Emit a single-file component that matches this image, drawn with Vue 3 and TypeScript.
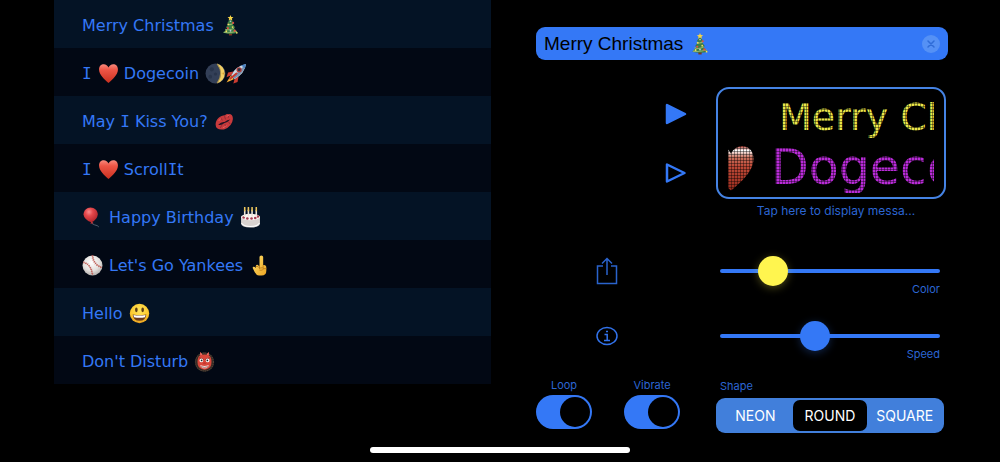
<script setup lang="ts">
import { ref } from 'vue'

interface Part {
  kind: 'text' | 'serif' | 'emoji'
  value: string
}

const text = (value: string): Part => ({ kind: 'text', value })
const serif = (value: string): Part => ({ kind: 'serif', value })
const emoji = (value: string): Part => ({ kind: 'emoji', value })

const presets: Part[][] = [
  [text('Merry Christmas '), emoji('tree')],
  [serif('I'), text(' '), emoji('heart'), text(' Dogecoin '), emoji('moon'), emoji('rocket')],
  [text('May '), serif('I'), text(' Kiss You? '), emoji('kiss')],
  [serif('I'), text(' '), emoji('heart'), text(' Scroll'), serif('I'), text('t')],
  [emoji('balloon'), text(' Happy Birthday '), emoji('cake')],
  [emoji('baseball'), text(" Let's Go Yankees "), emoji('finger')],
  [text('Hello '), emoji('smile')],
  [text("Don't Disturb "), emoji('ogre')],
]

const shapes = ['NEON', 'ROUND', 'SQUARE']

const message = ref('Merry Christmas')
const color = ref(20)
const speed = ref(42)
const loop = ref(true)
const vibrate = ref(true)
const shape = ref('ROUND')
</script>

<template>
  <div class="screen">
    <svg class="sprite" width="0" height="0" aria-hidden="true">
      <defs>
        <linearGradient id="g-heart" x1="0" y1="0" x2="0" y2="1">
          <stop offset="0" stop-color="#f9897c" />
          <stop offset="0.3" stop-color="#ee5546" />
          <stop offset="1" stop-color="#c9301f" />
        </linearGradient>
        <linearGradient id="g-led-heart" x1="0" y1="0" x2="0" y2="1">
          <stop offset="0" stop-color="#b84034" />
          <stop offset="0.1" stop-color="#fff" />
          <stop offset="0.25" stop-color="#c9725f" />
          <stop offset="0.45" stop-color="#bf4a38" />
          <stop offset="1" stop-color="#952a1c" />
        </linearGradient>
        <radialGradient id="g-balloon" cx="0.38" cy="0.3" r="0.7">
          <stop offset="0" stop-color="#f98a8c" />
          <stop offset="0.4" stop-color="#e4474b" />
          <stop offset="1" stop-color="#b3262c" />
        </radialGradient>
        <radialGradient id="g-ball" cx="0.45" cy="0.35" r="0.7">
          <stop offset="0" stop-color="#fff" />
          <stop offset="0.6" stop-color="#e3dfdc" />
          <stop offset="1" stop-color="#a9a5a2" />
        </radialGradient>
        <radialGradient id="g-smile" cx="0.5" cy="0.35" r="0.7">
          <stop offset="0" stop-color="#ffe65c" />
          <stop offset="0.65" stop-color="#fcc92e" />
          <stop offset="1" stop-color="#e08f1b" />
        </radialGradient>
        <linearGradient id="g-hand" x1="0" y1="0" x2="1" y2="1">
          <stop offset="0" stop-color="#ffe06a" />
          <stop offset="1" stop-color="#eda524" />
        </linearGradient>
        <symbol id="tree" viewBox="0 0 40 40">
          <path d="M17 33h6v6h-6z" fill="#7a3524" />
          <path d="M20 6l6 9-3 1 6 8-3 1 8 9q-14 4-28 0l8-9-3-1 6-8-3-1z" fill="#3c7c43" />
          <path d="M14 17q6 3 11-1M10 27q9 3 17-2M7 33q12 2 25-2" fill="none" stroke="#94b56b" stroke-width="2" />
          <path d="M20 0l1.6 3.7 4 .3-3 2.6.9 3.9-3.5-2.1-3.5 2.1.9-3.9-3-2.6 4-.3z" fill="#f6d448" />
          <g fill="#dc5144"><circle cx="25" cy="15" r="2" /><circle cx="15" cy="25" r="2" /><circle cx="28" cy="30" r="2.2" /></g>
          <g fill="#f5df65"><circle cx="16" cy="18" r="1.6" /><circle cx="24" cy="23" r="1.6" /><circle cx="12" cy="31" r="1.8" /><circle cx="32" cy="34" r="1.6" /></g>
          <g fill="#b9cad9"><circle cx="20" cy="12" r="1.5" /><circle cx="20" cy="30" r="1.7" /></g>
        </symbol>
        <symbol id="heart" viewBox="0 0 40 40">
          <path d="M20 38C13 32 2 23 2 12.500C2 6 6 2.500 11 2.500c4 0 7.500 2.500 9 6c1.500-3.500 5-6 9-6c5 0 9 3.500 9 10C38 23 27 32 20 38z" fill="url(#g-heart)" />
        </symbol>
        <symbol id="led-heart" viewBox="0 0 40 40">
          <path d="M20 38C13 32 2 23 2 12.500C2 6 6 2.500 11 2.500c4 0 7.500 2.500 9 6c1.500-3.500 5-6 9-6c5 0 9 3.500 9 10C38 23 27 32 20 38z" fill="url(#g-led-heart)" />
        </symbol>
        <symbol id="moon" viewBox="0 0 40 40">
          <circle cx="20" cy="20" r="19" fill="#333f57" />
          <path d="M23 1.500a19 19 0 0 1 0 37q14-18 0-37z" fill="#f3cf63" />
          <path d="M23 1.500q14 18 0 37" fill="none" stroke="#ab944f" stroke-width="2" />
          <g fill="#28344a"><circle cx="13" cy="12" r="4" /><circle cx="20" cy="21" r="3" /><circle cx="10" cy="26" r="3.500" /></g>
          <circle cx="35" cy="20" r="1.800" fill="#d49d35" />
        </symbol>
        <symbol id="rocket" viewBox="0 0 40 40">
          <path d="M14 16L4 18 1 27l10-4zM24 25l-2 11-8 3 3-11z" fill="#c93b31" />
          <path d="M9 24L1 37l14-6z" fill="#f3a72e" />
          <path d="M10 26l-5 8 8-4z" fill="#ffe374" />
          <path d="M10 24Q16 7 38 2Q36 20 16 31z" fill="#c9d8e5" />
          <path d="M16 30Q35 19 38 2L13 27z" fill="#7893b2" />
          <path d="M29 4.500L38 2l-2 9z" fill="#4a82c4" />
          <circle cx="25" cy="13" r="5" fill="#bb3e38" />
          <circle cx="25" cy="13" r="2.800" fill="#2b3445" />
          <path d="M20 20L8 30" stroke="#c93b31" stroke-width="4" stroke-linecap="round" />
        </symbol>
        <symbol id="kiss" viewBox="0 0 40 40">
          <path d="M3 25C4 15 12 8 21 8q3-3 6-2q9-1 9 9q-1 14-17 20Q3 37 3 25z" fill="#c93a3c" />
          <path d="M8 26q6-6 12-5q5-5 11-5q-4 5-11 7q-6 5-12 3z" fill="#221323" />
          <path d="M13 13l3 5M20 10l2 6M28 8l-1 5M12 32l3-5M22 31l-1-6M31 25l-4-5" stroke="#812934" stroke-width="1.500" />
          <path d="M9 19l4-5M24 10l5-2M17 32l7-4" stroke="#ed6867" stroke-width="1.500" />
        </symbol>
        <symbol id="balloon" viewBox="0 0 40 40">
          <path d="M19 28q-1 5 5 6q6 1 8 4" fill="none" stroke="#657080" stroke-width="1.500" />
          <path d="M16 1C24 1 30 7 30 14c0 7-7 14-12 15c-7-1-15-8-15-15C3 7 9 1 16 1z" fill="url(#g-balloon)" />
          <path d="M18 27l4 4-6 1z" fill="#bd3034" />
        </symbol>
        <symbol id="cake" viewBox="0 0 40 40">
          <path d="M2 18v14q1 7 18 7t18-7V18z" fill="#d9d3d0" />
          <ellipse cx="20" cy="19" rx="18" ry="6" fill="#fbf6f3" />
          <path d="M3 31q4 6 17 6t17-6" fill="none" stroke="#fff" stroke-width="2" />
          <g fill="#a63c50"><circle cx="7" cy="20" r="2.500" /><circle cx="14" cy="22" r="2.500" /><circle cx="22" cy="22" r="2.500" /><circle cx="29" cy="21" r="2.500" /><circle cx="34" cy="18" r="2.500" /></g>
          <path d="M9 6v13M16 5v13M23 5v13M31 6v13" stroke="#eee5da" stroke-width="3" />
          <path d="M9 1v6M16 1v6M23 1v6M31 1v6" stroke="#edc65d" stroke-width="3" stroke-linecap="round" />
        </symbol>
        <symbol id="baseball" viewBox="0 0 40 40">
          <circle cx="20" cy="20" r="19" fill="url(#g-ball)" />
          <path d="M3 14q15 4 17 24M20 1q1 17 18 23" fill="none" stroke="#c26159" stroke-width="1.500" />
          <path d="M3 14q15 4 17 24M20 1q1 17 18 23" fill="none" stroke="#b4473f" stroke-width="4" stroke-dasharray="1 3" />
        </symbol>
        <symbol id="finger" viewBox="0 0 40 40">
          <path d="M20 22V4q0-3 3.500-3T27 4v15q6-1 6 5v6q0 9-9 9h-5q-5 0-8-6L7 25q0-4 4-2l2 2v-4q1-3 4-2z" fill="url(#g-hand)" />
          <path d="M20 20v7M27 19v7M13 22q5-2 7 3q7-2 8 1q-1 4-8 3M33 26h-5" fill="none" stroke="#b97818" stroke-width="1.500" />
        </symbol>
        <symbol id="smile" viewBox="0 0 40 40">
          <circle cx="20" cy="20" r="18.500" fill="url(#g-smile)" />
          <ellipse cx="14" cy="13" rx="2.500" ry="4.500" fill="#5b3b14" />
          <ellipse cx="26" cy="13" rx="2.500" ry="4.500" fill="#5b3b14" />
          <path d="M7 22q13 3 26 0q-1 12-13 12T7 22z" fill="#6d3b19" />
          <path d="M8.500 23q11.500 2 23 0l-1 4q-10 2-21 0z" fill="#fff" />
        </symbol>
        <symbol id="ogre" viewBox="0 0 40 40">
          <circle cx="20" cy="21" r="18.500" fill="#352b25" />
          <circle cx="20" cy="21" r="17" fill="none" stroke="#54453a" stroke-width="2" stroke-dasharray="2 2" />
          <path d="M7 16q1-6 5-8V2l4 5q4-1 8 0l4-5v6q4 2 5 8q2 12-5 17q-8 5-16 0Q5 28 7 16z" fill="#d9463a" />
          <path d="M12 2v6l4-1zM28 2v6l-4-1z" fill="#f17367" />
          <path d="M10 13l8 3M30 13l-8 3" stroke="#642722" stroke-width="1.500" />
          <circle cx="14" cy="18" r="3.500" fill="#fff" /><circle cx="26" cy="18" r="3.500" fill="#fff" />
          <circle cx="14.500" cy="18" r="1.700" fill="#222" /><circle cx="25.500" cy="18" r="1.700" fill="#222" />
          <path d="M17 24q3-4 6 0" fill="#aa2821" />
          <path d="M12 27q8 3 16 0q-1 6-8 6t-8-6z" fill="#fff" />
          <path d="M13 30q7 2 14 0" fill="none" stroke="#832922" stroke-width="1.500" />
        </symbol>
      </defs>
    </svg>

    <main class="layout">
      <ul class="presets">
        <li v-for="(preset, i) in presets" :key="i">
          <button type="button" class="preset">
            <template v-for="(part, j) in preset" :key="j">
              <svg v-if="part.kind === 'emoji'" class="emoji" role="img" :aria-label="part.value"><use :href="'#' + part.value" /></svg>
              <span v-else :class="part.kind">{{ part.value }}</span>
            </template>
          </button>
        </li>
      </ul>

      <section class="panel">
        <div class="field">
          <input v-model="message" class="field-input" type="text" aria-label="Message" />
          <svg class="field-emoji" role="img" aria-label="tree"><use href="#tree" /></svg>
          <button type="button" class="clear" aria-label="Clear text" @click="message = ''">
            <svg viewBox="0 0 18 18" width="18" height="18">
              <circle cx="9" cy="9" r="9" fill="#5591f5" />
              <path d="M6 6l6 6M12 6l-6 6" stroke="#2f6cd8" stroke-width="1.500" stroke-linecap="round" />
            </svg>
          </button>
        </div>

        <div class="play">
          <button type="button" class="icon" aria-label="Play filled">
            <svg viewBox="0 0 22 22" width="22" height="22">
              <path d="M2 2v18l18-9z" fill="#3478f6" stroke="#3478f6" stroke-width="2.500" stroke-linejoin="round" />
            </svg>
          </button>
          <button type="button" class="icon" aria-label="Play outlined">
            <svg viewBox="0 0 22 22" width="22" height="22">
              <path d="M2 2.500v17l17.500-8.500z" fill="none" stroke="#3478f6" stroke-width="2.500" stroke-linejoin="round" />
            </svg>
          </button>
        </div>

        <div class="preview-block">
          <button type="button" class="preview" aria-label="Display message">
            <span class="leds">
              <span class="led-line first">Merry Christmas</span>
              <span class="led-line second">
                <svg class="led-heart" aria-hidden="true"><use href="#led-heart" /></svg>
                Dogecoin
              </span>
            </span>
          </button>
          <p class="caption">Tap here to display messa...</p>
        </div>

        <div class="actions">
          <button type="button" class="icon" aria-label="Share">
            <svg viewBox="0 0 22 28" width="22" height="28" fill="none" stroke="#2a63cc" stroke-width="1.500">
              <path d="M7 9H1.500v17.500h19V9H15M11 18V1.500M6 6.500l5-5 5 5" />
            </svg>
          </button>
          <button type="button" class="icon" aria-label="Information">
            <svg viewBox="0 0 22 20" width="22" height="20" fill="none" stroke="#3273ec" stroke-width="1.500">
              <ellipse cx="11" cy="10" rx="10" ry="8.500" />
              <path d="M8.500 8.500h2.700v6M8 14.500h6M10 5.500h2" />
            </svg>
          </button>
        </div>

        <div class="sliders">
          <div class="slider">
            <input id="color" v-model="color" class="range yellow" type="range" min="0" max="100" />
            <label for="color">Color</label>
          </div>
          <div class="slider">
            <input id="speed" v-model="speed" class="range" type="range" min="0" max="100" />
            <label for="speed">Speed</label>
          </div>
        </div>

        <div class="toggles">
          <label class="toggle">
            Loop
            <input v-model="loop" type="checkbox" role="switch" />
          </label>
          <label class="toggle">
            Vibrate
            <input v-model="vibrate" type="checkbox" role="switch" />
          </label>
        </div>

        <fieldset class="shape">
          <legend>Shape</legend>
          <div class="segments">
            <label v-for="name in shapes" :key="name" class="segment" :class="{ on: shape === name }">
              <input v-model="shape" type="radio" name="shape" :value="name" />
              {{ name }}
            </label>
          </div>
        </fieldset>
      </section>
    </main>

    <div class="home-bar"></div>
  </div>
</template>

<style>
body {
  margin: 0;
  background: #000;
}
</style>

<style scoped>
* {
  box-sizing: border-box;
}

.screen {
  display: flex;
  flex-direction: column;
  min-height: 100vh;
  background: #000;
  color: #3478f6;
  font-family: Inter, "Liberation Sans", sans-serif;
}

.sprite {
  position: absolute;
}

.layout {
  flex: 1;
  display: grid;
  grid-template-columns: minmax(0, 437fr) minmax(0, 412fr);
  column-gap: 45px;
  padding: 0 52px 0 54px;
}

button {
  padding: 0;
  border: 0;
  background: none;
  color: inherit;
  font: inherit;
}

svg {
  display: block;
  flex: none;
}

.presets {
  margin: 0;
  padding: 0;
  list-style: none;
}

.presets li {
  background: #020814;
}

.presets li:nth-child(odd) {
  background: #041325;
}

.preset {
  display: flex;
  align-items: center;
  width: 100%;
  height: 48px;
  padding: 3px 28px 0;
  font-family: "DejaVu Sans", sans-serif;
  font-size: 16px;
  text-align: left;
  white-space: pre;
}

.serif {
  font-family: "DejaVu Sans Mono", monospace;
}

.emoji {
  width: 21px;
  height: 21px;
}

.text + .emoji {
  margin-left: 1px;
}

.emoji:first-child {
  margin-right: 1px;
}

.panel {
  display: grid;
  grid-template-columns: 180px minmax(0, 1fr);
  align-content: start;
  padding-top: 27px;
}

.field {
  grid-column: 1 / -1;
  display: flex;
  align-items: center;
  height: 33px;
  padding: 0 8px;
  border-radius: 9px;
  background: #3478f6;
}

.field-input {
  field-sizing: content;
  min-width: 0;
  padding: 0;
  border: 0;
  outline: 0;
  background: none;
  color: #000;
  font-family: "Liberation Sans", sans-serif;
  font-size: 19px;
}

.field-emoji {
  width: 22px;
  height: 22px;
  margin-left: 6px;
}

.clear {
  margin-left: auto;
}

.play {
  display: flex;
  flex-direction: column;
  align-items: flex-end;
  gap: 37px;
  padding: 43px 29px 0 0;
}

.preview-block {
  padding-top: 27px;
}

.preview {
  display: block;
  width: calc(100% - 2px);
  height: 112px;
  padding: 5px 10px 4px;
  border: 2px solid #4583e4;
  border-radius: 13px;
}

.leds {
  position: relative;
  display: block;
  height: 99px;
  overflow: hidden;
  font-family: "DejaVu Sans", sans-serif;
  text-align: left;
  white-space: nowrap;
}

.leds::after {
  content: "";
  position: absolute;
  inset: 0;
  background:
    repeating-linear-gradient(90deg, rgba(0, 0, 0, 0.4) 0 1px, transparent 1px 3px),
    repeating-linear-gradient(rgba(0, 0, 0, 0.4) 0 1px, transparent 1px 3px);
}

.led-line {
  display: flex;
}

.first {
  padding-left: 51px;
  color: #eae648;
  font-size: 38px;
  line-height: 46px;
}

.second {
  gap: 15px;
  margin-left: -22px;
  color: #b92bd8;
  font-size: 49px;
  line-height: 56px;
}

.led-heart {
  width: 50px;
  height: 50px;
  margin-top: 3px;
}

.caption {
  margin: 5px 0 0;
  padding-left: 8px;
  font-size: 12px;
  line-height: 14px;
  text-align: center;
  color: #2c66d3;
}

.actions {
  display: flex;
  flex-direction: column;
  align-items: center;
  gap: 41px;
  padding: 39px 38px 0 0;
}

.sliders {
  display: grid;
  gap: 25px;
  padding: 38px 8px 17px 4px;
}

.slider label {
  display: block;
  margin-top: -4px;
  font-size: 11px;
  line-height: 14px;
  text-align: right;
  color: #2c66d3;
}

.range {
  appearance: none;
  display: block;
  width: 100%;
  height: 30px;
  margin: 0;
  background: none;
}

.range::-webkit-slider-runnable-track {
  height: 4px;
  border-radius: 2px;
  background: #3478f6;
}

.range::-webkit-slider-thumb {
  appearance: none;
  width: 30px;
  height: 30px;
  margin-top: -13px;
  border-radius: 50%;
  background: #3478f6;
  box-shadow: 0 2px 8px rgba(52, 120, 246, 0.3);
}

.yellow::-webkit-slider-thumb {
  background: #fff54f;
  box-shadow: 0 2px 8px rgba(255, 245, 79, 0.3);
}

.toggles {
  display: flex;
  gap: 32px;
  font-size: 11px;
  line-height: 14px;
}

.toggle {
  display: flex;
  flex-direction: column;
  align-items: center;
  gap: 3px;
  width: 56px;
  color: #2c66d3;
}

.toggle input {
  appearance: none;
  width: 56px;
  height: 34px;
  margin: 0;
  padding: 2px;
  border-radius: 17px;
  background: #333;
}

.toggle input::before {
  content: "";
  display: block;
  width: 30px;
  height: 30px;
  border-radius: 50%;
  background: #000;
}

.toggle input:checked {
  background: #3478f6;
}

.toggle input:checked::before {
  margin-left: auto;
}

.shape {
  min-width: 0;
  margin: 0;
  padding: 0 4px 0 0;
  border: 0;
}

.shape legend {
  padding: 1px 0 5px 4px;
  font-size: 11px;
  line-height: 14px;
  color: #2c66d3;
}

.segments {
  display: grid;
  grid-template-columns: repeat(3, 1fr);
  padding: 2px;
  border-radius: 9px;
  background: #417fdb;
}

.segment {
  display: flex;
  justify-content: center;
  border-radius: 7px;
  color: #fff;
  font-size: 14px;
  line-height: 31px;
}

.segment.on {
  background: #000;
}

.segment input {
  position: absolute;
  appearance: none;
  margin: 0;
}

.home-bar {
  width: 26%;
  min-width: 120px;
  height: 6px;
  margin: 0 auto 9px;
  border-radius: 3px;
  background: #fff;
}
</style>
